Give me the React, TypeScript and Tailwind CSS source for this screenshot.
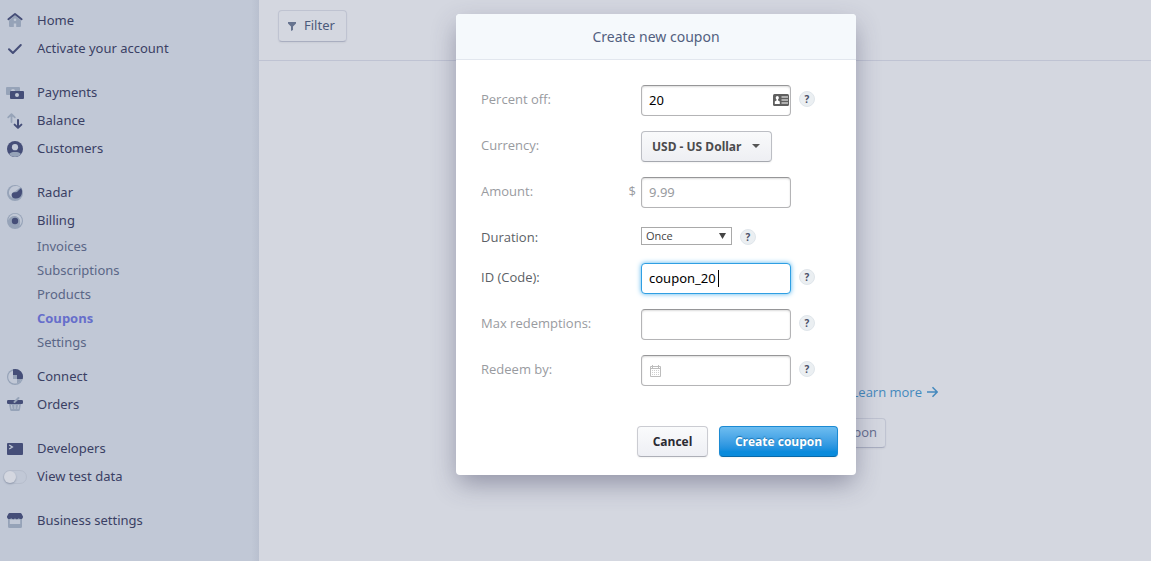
import type { ReactNode } from "react";

const DARK = "#454e78";
const LIGHT = "#96a3b8";
const BG = "#c1c8d6";

function Icon({ children }: { children: ReactNode }) {
  return (
    <svg
      className="mt-[7px] h-4 w-4 shrink-0 overflow-visible"
      viewBox="0 0 16 16"
      fill="none"
      aria-hidden="true"
    >
      {children}
    </svg>
  );
}

const icons = {
  home: (
    <Icon>
      <path fill={LIGHT} d="M8 2.5 14 7.500V13a1 1 0 0 1-1 1H3a1 1 0 0 1-1-1V7.500z" />
      <circle cx="8" cy="6.700" r="1.300" fill={BG} />
      <path fill={BG} d="M6.800 10.500h2.400V14H6.800z" />
      <path stroke={DARK} strokeWidth="2" strokeLinecap="round" strokeLinejoin="round" d="M1.400 6.200 8 1l6.600 5.200" />
    </Icon>
  ),
  check: (
    <Icon>
      <path stroke={DARK} strokeWidth="2" strokeLinecap="round" strokeLinejoin="round" d="M2 8.2 5.900 12 13.800 4" />
    </Icon>
  ),
  payments: (
    <Icon>
      <rect x="-1" y="2" width="14" height="8" rx="1" fill={LIGHT} />
      <circle cx="6" cy="6" r="2" fill={BG} />
      <rect x="3" y="6" width="14" height="8" rx="1" fill={DARK} />
      <circle cx="10" cy="10" r="2" fill={BG} />
    </Icon>
  ),
  balance: (
    <Icon>
      <path stroke={LIGHT} strokeWidth="1.800" strokeLinecap="round" strokeLinejoin="round" d="M4.500 9V1.200M1.200 4.400 4.500 1.100l3.300 3.300" />
      <path stroke={DARK} strokeWidth="2" strokeLinecap="round" strokeLinejoin="round" d="M11 7v7.600M7.600 11.600l3.400 3.300 3.400-3.300" />
    </Icon>
  ),
  customers: (
    <Icon>
      <circle cx="8" cy="8" r="8" fill={DARK} />
      <circle cx="8" cy="6.200" r="3.100" fill={BG} />
      <path fill={LIGHT} d="M2 13.300C3 11.600 5 11 8 11s5 .6 6 2.300A8 8 0 0 1 8 16a8 8 0 0 1-6-2.700z" />
    </Icon>
  ),
  radar: (
    <Icon>
      <circle cx="8" cy="8" r="8" fill={LIGHT} />
      <path fill={BG} d="M13.200 2.400A7 7 0 0 0 2 6.500c-.5 2.600.8 5 3.100 6.200C3.800 9.800 5 6.800 8 6.600z" />
      <path fill={DARK} d="M14.200 3A8 8 0 0 1 14.800 9c-.8 3.200-3.600 4.800-6.300 4.600-2.300-.1-3.900-1.700-3.800-3.800.1-1.800 1.600-2.800 3.700-2.500C10.600 7.600 11.500 5 14.200 3z" />
    </Icon>
  ),
  billing: (
    <Icon>
      <circle cx="8" cy="8" r="8" fill={LIGHT} />
      <path fill={BG} d="M1.300 7.500A6.800 6.800 0 1 1 12.300 13C14 10 13.500 4.500 9 3.200 5.500 2.300 2.500 4 1.300 7.500z" />
      <circle cx="8" cy="8" r="4.600" fill={LIGHT} />
      <circle cx="8" cy="8" r="3.200" fill={DARK} />
    </Icon>
  ),
  connect: (
    <Icon>
      <circle cx="8" cy="8" r="8" fill={LIGHT} />
      <path fill={BG} d="M1.200 8A6.800 6.800 0 0 1 6 1.700V10h8.400A6.800 6.800 0 0 1 8.500 14.600C4 14.600 1.200 11.500 1.200 8z" />
      <path fill={LIGHT} d="M6 6h4v4H6zM10 10h4.500a7 7 0 0 1-4.500 4.500z" />
      <path fill={DARK} d="M6 .3A7.900 7.900 0 0 1 15.700 10H10V6H6z" />
    </Icon>
  ),
  orders: (
    <Icon>
      <path fill={LIGHT} d="M1.800 6h12.400l-1.300 6.800a1.500 1.500 0 0 1-1.500 1.200H4.600a1.500 1.500 0 0 1-1.500-1.200z" />
      <path stroke={BG} strokeWidth="1" d="m4.500 8 .6 4M8 8v4M11.500 8l-.6 4" />
      <rect x="0" y="3" width="16" height="4" rx="1.200" fill={DARK} />
      <path stroke={LIGHT} strokeWidth="2" strokeLinecap="round" d="M7.500 5 11.500 1" />
    </Icon>
  ),
  developers: (
    <Icon>
      <rect x="0" y="2" width="16" height="12" rx="1" fill={DARK} />
      <path stroke={BG} strokeWidth="1.300" d="m2.200 4 3.200 2L2.200 8" />
    </Icon>
  ),
  business: (
    <Icon>
      <path fill={LIGHT} fillRule="evenodd" d="M1 5h14v8.500A1.500 1.500 0 0 1 13.500 15h-11A1.500 1.500 0 0 1 1 13.500zm1.800 1.500V11h10.400V6.500z" />
      <path fill={DARK} d="M2.500 0h11a1 1 0 0 1 .9.600L16 3.500A2.200 2.200 0 0 1 13.500 6a2.500 2.500 0 0 1-1.900-.8 2.500 2.500 0 0 1-3.600 0 2.500 2.500 0 0 1-3.600 0A2.500 2.500 0 0 1 2.500 6 2.200 2.200 0 0 1 0 3.500L1.600.6A1 1 0 0 1 2.500 0z" />
    </Icon>
  ),
};

function NavItem({ icon, label }: { icon: ReactNode; label: string }) {
  return (
    <li>
      <a href="#" className="flex h-7 gap-[14px] pl-[7px] leading-7">
        {icon}
        {label}
      </a>
    </li>
  );
}

function Sidebar() {
  const sub = ["Invoices", "Subscriptions", "Products", "Coupons", "Settings"];
  return (
    <nav className="w-[259px] shrink-0 bg-[#c1c8d6] bg-linear-to-r from-[#c1c8d6] from-97% to-[#b9c0cf] pt-[6px] font-['Noto_Sans',sans-serif] text-[13px] text-[#3a4064]">
      <ul>
        <NavItem icon={icons.home} label="Home" />
        <NavItem icon={icons.check} label="Activate your account" />
      </ul>
      <ul className="mt-4">
        <NavItem icon={icons.payments} label="Payments" />
        <NavItem icon={icons.balance} label="Balance" />
        <NavItem icon={icons.customers} label="Customers" />
      </ul>
      <ul className="mt-4">
        <NavItem icon={icons.radar} label="Radar" />
        <NavItem icon={icons.billing} label="Billing" />
        <li>
          <ul className="mb-2 pl-[37px] leading-6 text-[#5a6686]">
            {sub.map((s) => (
              <li key={s}>
                <a
                  href="#"
                  className={s === "Coupons" ? "font-['Open_Sans',sans-serif] font-bold text-[#666ecb]" : ""}
                >
                  {s}
                </a>
              </li>
            ))}
          </ul>
        </li>
        <NavItem icon={icons.connect} label="Connect" />
        <NavItem icon={icons.orders} label="Orders" />
      </ul>
      <ul className="mt-4">
        <NavItem icon={icons.developers} label="Developers" />
        <li>
          <label className="flex h-7 gap-[10px] pl-[3px] leading-7">
            <input
              type="checkbox"
              role="switch"
              className="mt-2 h-[14px] w-6 appearance-none rounded-full border border-[#b6bdcc] before:block before:h-3 before:w-3 before:rounded-full before:bg-[#d4d7e0] before:shadow-[0_1px_2px_#8f98ac]"
            />
            View test data
          </label>
        </li>
      </ul>
      <ul className="mt-4">
        <NavItem icon={icons.business} label="Business settings" />
      </ul>
    </nav>
  );
}

function Help() {
  return (
    <button
      type="button"
      aria-label="Help"
      className="ml-2 flex h-4 w-4 items-center justify-center rounded-full border border-[#e0e6eb] bg-[#ebeff2] text-[10px] font-bold text-[#4c5068]"
    >
      ?
    </button>
  );
}

function Row({ id, label, active, children }: { id: string; label: string; active?: boolean; children: ReactNode }) {
  return (
    <div className="flex">
      <label
        htmlFor={id}
        className={active ? "w-[160px] leading-7 text-[#5c5f66]" : "w-[160px] leading-7 text-[#999b9f]"}
      >
        {label}
      </label>
      {children}
    </div>
  );
}

const field =
  "h-[31px] w-[150px] rounded-[4px] border border-[#b4b4b6] border-t-[#969698] bg-white px-[7px] pb-[2px] font-['Noto_Sans',sans-serif] text-[13px] text-black shadow-[inset_0_1px_2px_#dcdcdc] outline-none placeholder:text-[#999b9f]";
const focused =
  "h-[31px] w-[150px] rounded-[4px] border border-[#2f9fe3] bg-white px-[7px] pb-[2px] font-['Noto_Sans',sans-serif] text-[13px] text-black caret-transparent shadow-[0_0_5px_#53b5ee] outline-none";

function CouponDialog() {
  return (
    <form
      role="dialog"
      aria-labelledby="title"
      className="w-[400px] overflow-hidden rounded-[4px] bg-white text-[13px] shadow-[0_10px_26px_-2px_rgba(60,60,90,0.45)]"
    >
      <h1
        id="title"
        className="border-b border-[#e2e7ee] bg-[#f5f9fc] text-center font-['Noto_Sans',sans-serif] text-sm leading-[45px] text-[#525f7f]"
      >
        Create new coupon
      </h1>
      <div className="flex flex-col gap-[15px] px-[25px] pt-[25px]">
        <Row id="percent" label="Percent off:">
          <div className="relative">
            <input id="percent" className={field} defaultValue="20" />
            <svg className="absolute top-[9px] right-[2px] h-3 w-4" viewBox="0 0 16 12" aria-hidden="true">
              <rect width="16" height="12" rx="1.500" fill="#5f5f5f" />
              <circle cx="4.300" cy="3.700" r="1.600" fill="#fff" />
              <path fill="#fff" d="M3.500 5h1.600v1.500l1.700 1V10h-5V7.500l1.700-1zM8.500 2.500H15v1H8.500zM8.500 5.500H15v1H8.500zM8.500 8.500H15v1H8.500z" />
            </svg>
          </div>
          <div className="pt-[6px]">
            <Help />
          </div>
        </Row>
        <Row id="currency" label="Currency:">
          <div className="relative">
            <select
              id="currency"
              className="h-[31px] w-[131px] appearance-none rounded-[4px] border border-[#bcbec4] border-b-[#a5a8af] bg-linear-to-b from-[#f9fafb] to-[#eeeff3] pl-[10px] font-['Noto_Sans',sans-serif] text-xs font-bold text-[#4b4b4d] shadow-xs"
            >
              <option>USD - US Dollar</option>
            </select>
            <svg className="pointer-events-none absolute top-[13px] right-3 h-1 w-2" viewBox="0 0 8 4" aria-hidden="true">
              <path d="M0 0h8L4 4z" fill="#555" />
            </svg>
          </div>
        </Row>
        <Row id="amount" label="Amount:">
          <div className="relative">
            <span className="absolute right-full mr-[5px] leading-7 text-[#999b9f]">$</span>
            <input id="amount" className={field} placeholder="9.99" />
          </div>
        </Row>
        <div className="-mb-[3px]">
          <Row id="duration" label="Duration:" active>
            <div className="relative pt-1">
              <select
                id="duration"
                className="block h-[18px] w-[91px] appearance-none border border-[#a9a9a9] bg-white pl-1 text-[11px] leading-4 text-[#444]"
              >
                <option>Once</option>
              </select>
              <svg className="pointer-events-none absolute top-[10px] right-[6px] h-[6px] w-[7px]" viewBox="0 0 7 6" aria-hidden="true">
                <path d="M0 0h7L3.500 6z" fill="#444" />
              </svg>
            </div>
            <div className="pt-[6px]">
              <Help />
            </div>
          </Row>
        </div>
        <Row id="code" label="ID (Code):" active>
          <div className="relative">
            <input id="code" className={focused} defaultValue="coupon_20" />
            <span className="absolute top-[7px] left-[77px] h-[17px] w-px bg-black" />
          </div>
          <div className="pt-[6px]">
            <Help />
          </div>
        </Row>
        <Row id="max" label="Max redemptions:">
          <input id="max" className={field} />
          <div className="pt-[6px]">
            <Help />
          </div>
        </Row>
        <Row id="redeem" label="Redeem by:">
          <div className="relative">
            <input id="redeem" className={field} />
            <svg className="absolute top-[10px] left-[9px] h-3 w-[11px]" viewBox="0 0 11 12" fill="none" aria-hidden="true">
              <path stroke="#bdbdbd" d="M.5 1.500h10v10H.5z" />
              <path stroke="#bdbdbd" d="M0 3.500h11M2.500 0v3M8.500 0v3" />
              <path stroke="#d0d0d0" strokeDasharray="1 1" d="M2 5.500h7M2 7.500h7M2 9.500h7" />
            </svg>
          </div>
          <div className="pt-[6px]">
            <Help />
          </div>
        </Row>
      </div>
      <div className="flex justify-end gap-[11px] pt-10 pr-[18px] pb-[18px] text-xs font-bold">
        <button
          type="button"
          className="h-[31px] w-[71px] rounded-[4px] border border-[#cbccd2] border-b-[#adafb7] bg-linear-to-b from-[#fafbfc] to-[#eeeff4] text-[#2b2b33] shadow-xs"
        >
          Cancel
        </button>
        <button
          type="button"
          className="h-[31px] w-[119px] rounded-[4px] border border-[#1b8ad3] border-b-[#0769a8] bg-linear-to-b from-[#6dbdf0] to-[#0a8bdc] to-85% text-white shadow-xs [text-shadow:0_-1px_1px_#1673b0]"
        >
          Create coupon
        </button>
      </div>
    </form>
  );
}

export default function App() {
  return (
    <div className="relative flex min-h-screen bg-[#d4d7e0] font-['Open_Sans',sans-serif]">
      <Sidebar />
      <main className="flex-1 text-[13px]">
        <header className="border-b border-[#bfc3d3] px-[19px] pt-[10px] pb-[18px]">
          <button
            type="button"
            className="flex h-8 w-[69px] items-center gap-2 rounded-[4px] border border-[#bfc3d1] border-b-[#a9aec0] pl-[9px] font-['Noto_Sans',sans-serif] text-[#4c5a7b] shadow-xs"
          >
            <svg className="h-[9px] w-2" viewBox="0 0 8 9" aria-hidden="true">
              <path d="M0 0h8v1.500L5 4.500V8L3 9V4.500L0 1.500z" fill="#66738f" />
            </svg>
            Filter
          </button>
        </header>
        <div className="mx-auto flex max-w-[466px] flex-col items-end pt-[321px]">
          <a href="#" className="flex items-center gap-[5px] leading-5 text-[#4489bd]">
            Learn more
            <svg className="h-3 w-[11px]" viewBox="0 0 11 12" fill="none" aria-hidden="true">
              <path stroke="#4489bd" strokeWidth="1.500" d="M0 6h10M5.500 1.200 10.200 6l-4.700 4.800" />
            </svg>
          </a>
          <button
            type="button"
            className="mt-4 mr-[52px] h-[30px] rounded-[4px] border border-[#bfc3d1] border-b-[#a9aec0] px-2 text-[#636b8d] shadow-xs"
          >
            Coupon
          </button>
        </div>
      </main>
      <div className="absolute inset-0 flex items-start justify-center pt-[14px] pl-[161px]">
        <CouponDialog />
      </div>
    </div>
  );
}
